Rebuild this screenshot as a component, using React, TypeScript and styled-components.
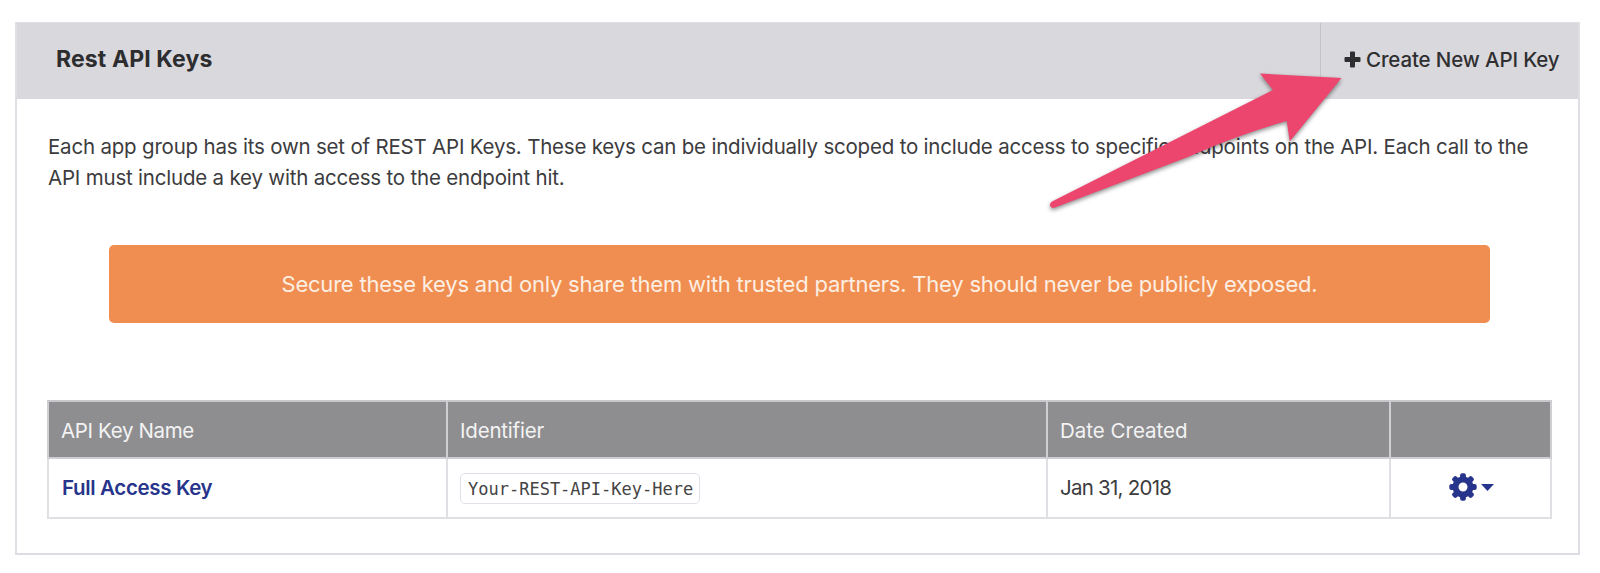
import React from 'react';
import styled, { createGlobalStyle } from 'styled-components';

const GlobalStyle = createGlobalStyle`
  * { box-sizing: border-box; }
  body { margin: 0; background: #fff; }
`;

const Page = styled.main`
  position: relative;
  height: 573px;
  padding: 22px 20px 0 15px;
  font-family: Inter, 'Liberation Sans', sans-serif;
  color: #3c3c3e;
  overflow: hidden;
`;

const Panel = styled.section`
  height: 533px;
  border: 2px solid #dfdfe5;
  border-top-width: 1px;
  border-bottom-color: #dcdce4;
`;

const PanelHeader = styled.header`
  display: flex;
  justify-content: space-between;
  height: 76px;
  background: #d9d8dd;
`;

const Title = styled.h2`
  margin: 0 0 0 39px;
  font-size: 23px;
  font-weight: 700;
  line-height: 73px;
  letter-spacing: 0.12px;
  color: #2d2d2f;
`;

const CreateButton = styled.button`
  display: flex;
  align-items: center;
  gap: 5px;
  width: 258px;
  padding: 0 0 3px 23px;
  border: 0;
  border-left: 1px solid #c2c2c9;
  background: none;
  color: #2f2f31;
  font: 500 20.5px Inter, sans-serif;
  letter-spacing: -0.13px;
  white-space: nowrap;
`;

const PanelBody = styled.div`
  padding: 32px 26px 0 31px;
`;

const Intro = styled.p`
  margin: 0;
  font-size: 20.5px;
  line-height: 31px;
  letter-spacing: -0.2px;
  white-space: nowrap;
`;

const Warning = styled.div`
  height: 78px;
  margin: 52px 62px 77px 61px;
  border-radius: 5px;
  background: #f08e51;
  color: #fdeee3;
  font-size: 22px;
  line-height: 79px;
  letter-spacing: -0.22px;
  text-align: center;
  white-space: nowrap;
`;

const KeyTable = styled.table`
  width: 1505px;
  margin-left: -1px;
  border-collapse: collapse;
  table-layout: fixed;
  font-size: 20.5px;
`;

const Column = styled.col<{ $width: number }>`
  width: ${({ $width }) => $width}px;
`;

const HeadCell = styled.th<{ $tracking?: number }>`
  height: 57px;
  padding: 2px 12px 0;
  border: 2px solid #cfcfd3;
  border-top-color: #c8c8cc;
  background: #8e8e90;
  color: #f3f3f4;
  font-weight: 400;
  letter-spacing: ${({ $tracking = 0 }) => $tracking}px;
  text-align: left;
`;

const Cell = styled.td<{ $center?: boolean }>`
  height: 60px;
  padding: ${({ $center }) => ($center ? '2px 11px 0 12px' : '0 12px')};
  border: 2px solid #e0e0e4;
  text-align: ${({ $center }) => ($center ? 'center' : 'left')};
`;

const KeyLink = styled.a`
  display: block;
  padding: 0 0 1px 1px;
  color: #27348b;
  font-weight: 600;
  letter-spacing: -0.35px;
`;

const DateText = styled.span`
  display: block;
  padding-bottom: 1px;
  letter-spacing: -0.75px;
`;

const Code = styled.code`
  display: block;
  width: 240px;
  height: 31px;
  padding-left: 7px;
  border: 1.5px solid #e1e1ea;
  border-radius: 5px;
  font: 17px/30px 'DejaVu Sans Mono', monospace;
  color: #444;
`;

const MenuButton = styled.button`
  display: inline-flex;
  align-items: center;
  gap: 4px;
  padding: 0;
  border: 0;
  background: none;
  color: #27348b;
`;

const ArrowOverlay = styled.svg`
  position: absolute;
  left: 0;
  top: 0;
  pointer-events: none;
  filter: drop-shadow(0 2px 2px rgba(0, 0, 0, 0.45));
`;

const PlusIcon = () => (
  <svg width="17" height="17" viewBox="0 0 17 17" fill="currentColor" aria-hidden>
    <path d="M7 .5h3q1 0 1 1V6h4.500q1 0 1 1v3q0 1-1 1H11v4.500q0 1-1 1H7q-1 0-1-1V11H1.500q-1 0-1-1V7q0-1 1-1H6V1.500q0-1 1-1z" />
  </svg>
);

const TEETH = [0, 45, 90, 135, 180, 225, 270, 315];

const CogIcon = () => (
  <svg width="28" height="28" viewBox="-14 -14 28 28" aria-hidden>
    <circle r="7.500" fill="none" stroke="currentColor" strokeWidth="6" />
    {TEETH.map((angle) => (
      <rect key={angle} x="-2.900" y="-13.700" width="5.800" height="6" rx="2" fill="currentColor" transform={`rotate(${angle})`} />
    ))}
  </svg>
);

const CaretIcon = () => (
  <svg width="13" height="9" viewBox="0 -2 13 9" fill="currentColor" aria-hidden>
    <path d="M0 0h13L6.500 7z" />
  </svg>
);

export default function App() {
  return (
    <Page>
      <GlobalStyle />
      <Panel>
        <PanelHeader>
          <Title>Rest API Keys</Title>
          <CreateButton>
            <PlusIcon />
            <span>Create New API Key</span>
          </CreateButton>
        </PanelHeader>
        <PanelBody>
          <Intro>
            Each app group has its own set of REST API Keys. These keys can be individually scoped to include access to specific endpoints on the API. Each call to the
            <br />
            API must include a key with access to the endpoint hit.
          </Intro>
          <Warning>Secure these keys and only share them with trusted partners. They should never be publicly exposed.</Warning>
          <KeyTable>
            <colgroup>
              <Column $width={399} />
              <Column $width={600} />
              <Column $width={343} />
              <Column $width={161} />
            </colgroup>
            <thead>
              <tr>
                <HeadCell $tracking={-0.35}>API Key Name</HeadCell>
                <HeadCell $tracking={-0.2}>Identifier</HeadCell>
                <HeadCell>Date Created</HeadCell>
                <HeadCell />
              </tr>
            </thead>
            <tbody>
              <tr>
                <Cell><KeyLink>Full Access Key</KeyLink></Cell>
                <Cell><Code>Your-REST-API-Key-Here</Code></Cell>
                <Cell><DateText>Jan 31, 2018</DateText></Cell>
                <Cell $center>
                  <MenuButton aria-label="Key actions">
                    <CogIcon />
                    <CaretIcon />
                  </MenuButton>
                </Cell>
              </tr>
            </tbody>
          </KeyTable>
        </PanelBody>
      </Panel>
      <ArrowOverlay width="1600" height="573" viewBox="0 0 1600 573" aria-hidden>
        <path
          fill="#ed466e"
          d="M1260 73.500L1341.500 78L1289.700 141.500L1286.700 121Q1240 134 1188 157L1055 207.500Q1051 209 1050 205.500Q1049.500 202.500 1053 201L1168 143L1273 90Z"
        />
      </ArrowOverlay>
    </Page>
  );
}
